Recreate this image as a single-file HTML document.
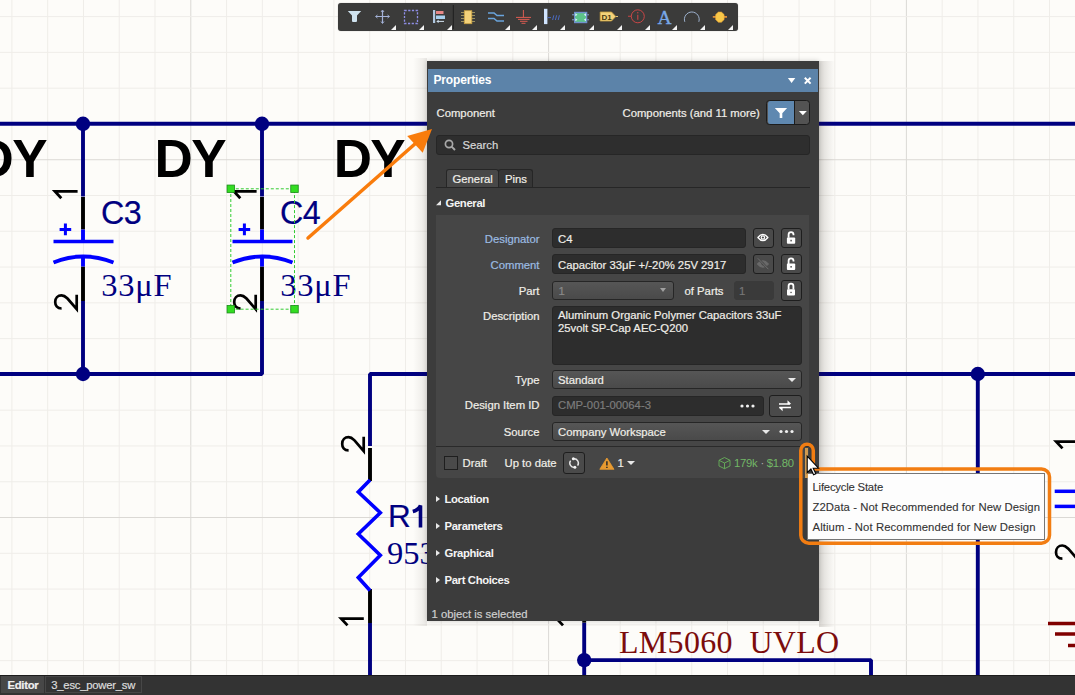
<!DOCTYPE html>
<html><head><meta charset="utf-8">
<style>
*{margin:0;padding:0;box-sizing:border-box}
html,body{width:1075px;height:695px;overflow:hidden;background:#fdfcf9;font-family:"Liberation Sans",sans-serif}
.a{position:absolute}
svg.a{overflow:visible}
.t{position:absolute;white-space:pre;line-height:1;font-size:11.3px;color:#f0eee8;-webkit-text-stroke:0.2px currentColor}
.lbl{position:absolute;white-space:pre;line-height:1;font-size:11.3px;color:#f0eee8;text-align:right;-webkit-text-stroke:0.2px currentColor}
.inp{position:absolute;background:#2d2d2d;border:1px solid #262626;border-radius:3px}
.dd{position:absolute;background:linear-gradient(#565656,#4a4a4a);border:1px solid #262626;border-radius:3px}
.btn{position:absolute;background:#4a4a4a;border:1.4px solid #1e1e1e;border-radius:3px}
.sec{position:absolute;font-weight:bold;font-size:11.3px;color:#f4f4f4;white-space:pre;line-height:1;letter-spacing:-0.35px}
.tri{position:absolute;width:0;height:0;border-left:5px solid transparent;border-right:5px solid transparent;border-top:5px solid #e8e8e8}
.rtri{position:absolute;width:0;height:0;border-top:3px solid transparent;border-bottom:3px solid transparent;border-left:4.2px solid #e8e8e8}
.tbt{position:absolute;width:0;height:0;border-left:5px solid transparent;border-bottom:5px solid #f4f4f4;top:24.5px}
</style></head><body>
<svg class="a" style="left:0;top:0" width="1075" height="695" viewBox="0 0 1075 695">
<rect width="1075" height="695" fill="#fdfcf9"/>
<line x1="11.90" y1="0" x2="11.90" y2="695" stroke="#efede9" stroke-width="1"/>
<line x1="47.68" y1="0" x2="47.68" y2="695" stroke="#efede9" stroke-width="1"/>
<line x1="83.46" y1="0" x2="83.46" y2="695" stroke="#efede9" stroke-width="1"/>
<line x1="119.24" y1="0" x2="119.24" y2="695" stroke="#efede9" stroke-width="1"/>
<line x1="155.02" y1="0" x2="155.02" y2="695" stroke="#efede9" stroke-width="1"/>
<line x1="190.80" y1="0" x2="190.80" y2="695" stroke="#dbd9d5" stroke-width="1"/>
<line x1="226.58" y1="0" x2="226.58" y2="695" stroke="#efede9" stroke-width="1"/>
<line x1="262.36" y1="0" x2="262.36" y2="695" stroke="#efede9" stroke-width="1"/>
<line x1="298.14" y1="0" x2="298.14" y2="695" stroke="#efede9" stroke-width="1"/>
<line x1="333.92" y1="0" x2="333.92" y2="695" stroke="#efede9" stroke-width="1"/>
<line x1="369.70" y1="0" x2="369.70" y2="695" stroke="#efede9" stroke-width="1"/>
<line x1="405.48" y1="0" x2="405.48" y2="695" stroke="#efede9" stroke-width="1"/>
<line x1="441.26" y1="0" x2="441.26" y2="695" stroke="#efede9" stroke-width="1"/>
<line x1="477.04" y1="0" x2="477.04" y2="695" stroke="#efede9" stroke-width="1"/>
<line x1="512.82" y1="0" x2="512.82" y2="695" stroke="#efede9" stroke-width="1"/>
<line x1="548.60" y1="0" x2="548.60" y2="695" stroke="#dbd9d5" stroke-width="1"/>
<line x1="584.38" y1="0" x2="584.38" y2="695" stroke="#efede9" stroke-width="1"/>
<line x1="620.16" y1="0" x2="620.16" y2="695" stroke="#efede9" stroke-width="1"/>
<line x1="655.94" y1="0" x2="655.94" y2="695" stroke="#efede9" stroke-width="1"/>
<line x1="691.72" y1="0" x2="691.72" y2="695" stroke="#efede9" stroke-width="1"/>
<line x1="727.50" y1="0" x2="727.50" y2="695" stroke="#efede9" stroke-width="1"/>
<line x1="763.28" y1="0" x2="763.28" y2="695" stroke="#efede9" stroke-width="1"/>
<line x1="799.06" y1="0" x2="799.06" y2="695" stroke="#efede9" stroke-width="1"/>
<line x1="834.84" y1="0" x2="834.84" y2="695" stroke="#efede9" stroke-width="1"/>
<line x1="870.62" y1="0" x2="870.62" y2="695" stroke="#efede9" stroke-width="1"/>
<line x1="906.40" y1="0" x2="906.40" y2="695" stroke="#dbd9d5" stroke-width="1"/>
<line x1="942.18" y1="0" x2="942.18" y2="695" stroke="#efede9" stroke-width="1"/>
<line x1="977.96" y1="0" x2="977.96" y2="695" stroke="#efede9" stroke-width="1"/>
<line x1="1013.74" y1="0" x2="1013.74" y2="695" stroke="#efede9" stroke-width="1"/>
<line x1="1049.52" y1="0" x2="1049.52" y2="695" stroke="#efede9" stroke-width="1"/>
<line x1="0" y1="16.60" x2="1075" y2="16.60" stroke="#efede9" stroke-width="1"/>
<line x1="0" y1="52.38" x2="1075" y2="52.38" stroke="#efede9" stroke-width="1"/>
<line x1="0" y1="88.16" x2="1075" y2="88.16" stroke="#efede9" stroke-width="1"/>
<line x1="0" y1="123.94" x2="1075" y2="123.94" stroke="#efede9" stroke-width="1"/>
<line x1="0" y1="159.72" x2="1075" y2="159.72" stroke="#dbd9d5" stroke-width="1"/>
<line x1="0" y1="195.50" x2="1075" y2="195.50" stroke="#efede9" stroke-width="1"/>
<line x1="0" y1="231.28" x2="1075" y2="231.28" stroke="#efede9" stroke-width="1"/>
<line x1="0" y1="267.06" x2="1075" y2="267.06" stroke="#efede9" stroke-width="1"/>
<line x1="0" y1="302.84" x2="1075" y2="302.84" stroke="#efede9" stroke-width="1"/>
<line x1="0" y1="338.62" x2="1075" y2="338.62" stroke="#efede9" stroke-width="1"/>
<line x1="0" y1="374.40" x2="1075" y2="374.40" stroke="#efede9" stroke-width="1"/>
<line x1="0" y1="410.18" x2="1075" y2="410.18" stroke="#efede9" stroke-width="1"/>
<line x1="0" y1="445.96" x2="1075" y2="445.96" stroke="#efede9" stroke-width="1"/>
<line x1="0" y1="481.74" x2="1075" y2="481.74" stroke="#efede9" stroke-width="1"/>
<line x1="0" y1="517.52" x2="1075" y2="517.52" stroke="#dbd9d5" stroke-width="1"/>
<line x1="0" y1="553.30" x2="1075" y2="553.30" stroke="#efede9" stroke-width="1"/>
<line x1="0" y1="589.08" x2="1075" y2="589.08" stroke="#efede9" stroke-width="1"/>
<line x1="0" y1="624.86" x2="1075" y2="624.86" stroke="#efede9" stroke-width="1"/>
<line x1="0" y1="660.64" x2="1075" y2="660.64" stroke="#efede9" stroke-width="1"/>
<path d="M0.0,123.8 L1075.0,123.8" fill="none" stroke="#000080" stroke-width="3.9" stroke-linejoin="bevel" stroke-linecap="butt"/>
<path d="M0.0,374.0 L262.0,374.0 L262.0,301.0" fill="none" stroke="#000080" stroke-width="3.9" stroke-linejoin="bevel" stroke-linecap="butt"/>
<path d="M262.0,123.8 L262.0,196.5" fill="none" stroke="#000080" stroke-width="3.9" stroke-linejoin="bevel" stroke-linecap="butt"/>
<path d="M83.0,123.8 L83.0,196.5" fill="none" stroke="#000080" stroke-width="3.9" stroke-linejoin="bevel" stroke-linecap="butt"/>
<path d="M83.0,301.0 L83.0,374.0" fill="none" stroke="#000080" stroke-width="3.9" stroke-linejoin="bevel" stroke-linecap="butt"/>
<path d="M370.0,446.0 L370.0,374.0 L1075.0,374.0" fill="none" stroke="#000080" stroke-width="3.9" stroke-linejoin="bevel" stroke-linecap="butt"/>
<path d="M370.0,623.0 L370.0,695.0" fill="none" stroke="#000080" stroke-width="3.9" stroke-linejoin="bevel" stroke-linecap="butt"/>
<path d="M977.8,374.0 L977.8,695.0" fill="none" stroke="#000080" stroke-width="3.9" stroke-linejoin="bevel" stroke-linecap="butt"/>
<path d="M584.2,622.6 L584.2,695.0" fill="none" stroke="#000080" stroke-width="3.9" stroke-linejoin="bevel" stroke-linecap="butt"/>
<path d="M584.2,660.1 L871.0,660.1 L871.0,695.0" fill="none" stroke="#000080" stroke-width="3.9" stroke-linejoin="bevel" stroke-linecap="butt"/>
<circle cx="83.0" cy="123.8" r="7.2" fill="#000080"/>
<circle cx="262.0" cy="123.8" r="7.2" fill="#000080"/>
<circle cx="83.0" cy="374.0" r="7.2" fill="#000080"/>
<circle cx="977.8" cy="374.0" r="7.2" fill="#000080"/>
<circle cx="584.2" cy="660.1" r="7.2" fill="#000080"/>
<line x1="83.0" y1="197" x2="83.0" y2="229.5" stroke="#000" stroke-width="3.9"/>
<line x1="83.0" y1="266.5" x2="83.0" y2="301" stroke="#000" stroke-width="3.9"/>
<line x1="83.0" y1="229.5" x2="83.0" y2="242" stroke="#0000ff" stroke-width="3.9"/>
<line x1="83.0" y1="256" x2="83.0" y2="266.5" stroke="#0000ff" stroke-width="3.9"/>
<line x1="53.5" y1="241.5" x2="113.5" y2="241.5" stroke="#0000ff" stroke-width="3.6"/>
<path d="M53.5,262.5 Q83.0,250.5 113.5,262.5" fill="none" stroke="#0000ff" stroke-width="3.8"/>
<path d="M59.6,229.4 h11.6 M65.4,223.6 v11.6" stroke="#0000ff" stroke-width="3"/>
<path d="M77.6,191.4 H55.0 L61.3,198.2" fill="none" stroke="#000" stroke-width="2.8" stroke-linejoin="miter"/>
<path d="M61.6,308.5 C57.0,308.5 55.2,305.0 55.2,302.0 C55.2,298.0 58.0,295.3 61.5,295.3 C64.5,295.3 66.0,297.0 67.5,298.5 L76.7,309.2 V294.8" fill="none" stroke="#000" stroke-width="2.7" stroke-linejoin="miter"/>
<text x="101.0" y="223.7" font-family="Liberation Sans" font-size="32.3" letter-spacing="-0.5" fill="#000080" stroke="#000080" stroke-width="0.2">C3</text>
<text x="101.2" y="296" font-family="Liberation Serif" font-size="32.5" letter-spacing="0.8" fill="#000080">33μF</text>
<line x1="262.0" y1="197" x2="262.0" y2="229.5" stroke="#000" stroke-width="3.9"/>
<line x1="262.0" y1="266.5" x2="262.0" y2="301" stroke="#000" stroke-width="3.9"/>
<line x1="262.0" y1="229.5" x2="262.0" y2="242" stroke="#0000ff" stroke-width="3.9"/>
<line x1="262.0" y1="256" x2="262.0" y2="266.5" stroke="#0000ff" stroke-width="3.9"/>
<line x1="232.5" y1="241.5" x2="292.5" y2="241.5" stroke="#0000ff" stroke-width="3.6"/>
<path d="M232.5,262.5 Q262.0,250.5 292.5,262.5" fill="none" stroke="#0000ff" stroke-width="3.8"/>
<path d="M238.6,229.4 h11.6 M244.4,223.6 v11.6" stroke="#0000ff" stroke-width="3"/>
<path d="M256.6,191.4 H234.0 L240.3,198.2" fill="none" stroke="#000" stroke-width="2.8" stroke-linejoin="miter"/>
<path d="M240.6,308.5 C236.0,308.5 234.2,305.0 234.2,302.0 C234.2,298.0 237.0,295.3 240.5,295.3 C243.5,295.3 245.0,297.0 246.5,298.5 L255.7,309.2 V294.8" fill="none" stroke="#000" stroke-width="2.7" stroke-linejoin="miter"/>
<text x="280.0" y="223.7" font-family="Liberation Sans" font-size="32.3" letter-spacing="-0.5" fill="#000080" stroke="#000080" stroke-width="0.2">C4</text>
<text x="280.2" y="296" font-family="Liberation Serif" font-size="32.5" letter-spacing="0.8" fill="#000080">33μF</text>
<text x="-24.5" y="177" font-family="Liberation Sans" font-weight="bold" font-size="53" letter-spacing="-1.6" fill="#000">DY</text>
<text x="154.6" y="177" font-family="Liberation Sans" font-weight="bold" font-size="53" letter-spacing="-1.6" fill="#000">DY</text>
<text x="333.7" y="177" font-family="Liberation Sans" font-weight="bold" font-size="53" letter-spacing="-1.6" fill="#000">DY</text>
<line x1="370.0" y1="448" x2="370.0" y2="481" stroke="#000" stroke-width="3.9"/>
<line x1="370.0" y1="589" x2="370.0" y2="623" stroke="#000" stroke-width="3.9"/>
<path d="M370.0,480 L358.3,492 L380.3,512.7 L358.3,534 L380.3,555.2 L358.3,577.5 L370.0,590.5" fill="none" stroke="#0000ff" stroke-width="3.6" stroke-linejoin="miter"/>
<path d="M348.6,450.4 C344.0,450.4 342.2,446.9 342.2,443.9 C342.2,439.9 345.0,437.2 348.5,437.2 C351.5,437.2 353.0,438.9 354.5,440.4 L363.7,451.1 V436.7" fill="none" stroke="#000" stroke-width="2.7" stroke-linejoin="miter"/>
<path d="M363.8,618.6 H341.2 L347.5,625.4" fill="none" stroke="#000" stroke-width="2.8" stroke-linejoin="miter"/>
<text x="388" y="527.3" font-family="Liberation Sans" font-size="31.5" fill="#000080" stroke="#000080" stroke-width="0.2">R</text><path d="M420.5,527.5 V505.6 Q418.5,510 412.8,511.6" fill="none" stroke="#000080" stroke-width="3.6"/>
<text x="387" y="563.8" font-family="Liberation Serif" font-size="32.5" fill="#000080">953</text>
<path d="M579.3,618.6 H556.7 L563.0,625.4" fill="none" stroke="#000" stroke-width="2.8" stroke-linejoin="miter"/>
<line x1="584.2" y1="600" x2="584.2" y2="622.6" stroke="#000" stroke-width="3.9"/>
<text x="619" y="653.3" font-family="Liberation Serif" font-size="32" letter-spacing="0.3" fill="#7c0c0c" xml:space="preserve">LM5060  UVLO</text>
<line x1="1054.7" y1="491.3" x2="1075" y2="491.3" stroke="#0000ff" stroke-width="3.5"/>
<line x1="1054.7" y1="506.4" x2="1075" y2="506.4" stroke="#0000ff" stroke-width="3.5"/>
<path d="M1078.8,441.6 H1056.2 L1062.5,448.4" fill="none" stroke="#000" stroke-width="2.8" stroke-linejoin="miter"/>
<path d="M1062.4,558.7 C1057.8,558.7 1056.0,555.2 1056.0,552.2 C1056.0,548.2 1058.8,545.5 1062.3,545.5 C1065.3,545.5 1066.8,547.2 1068.3,548.7 L1077.5,559.4 V545.0" fill="none" stroke="#000" stroke-width="2.7" stroke-linejoin="miter"/>
<path d="M1048,623.5 H1075 M1055,634 H1075 M1068,645.5 H1075" stroke="#800000" stroke-width="3.4"/>
<rect x="230.8" y="188.8" width="63.69999999999999" height="120.39999999999998" fill="none" stroke="#33cc33" stroke-width="1" stroke-dasharray="3,2"/>
<rect x="227.05" y="185.05" width="7.5" height="7.5" fill="#33dd22" stroke="#1a8a1a" stroke-width="0.8"/>
<rect x="290.75" y="185.05" width="7.5" height="7.5" fill="#33dd22" stroke="#1a8a1a" stroke-width="0.8"/>
<rect x="227.05" y="305.45" width="7.5" height="7.5" fill="#33dd22" stroke="#1a8a1a" stroke-width="0.8"/>
<rect x="290.75" y="305.45" width="7.5" height="7.5" fill="#33dd22" stroke="#1a8a1a" stroke-width="0.8"/>
</svg>

<!-- toolbar -->
<div class="a" style="left:337.5px;top:3px;width:400px;height:27.5px;background:#3b3b3a;border-radius:3px;box-shadow:0 0 1px rgba(0,0,0,.4)">
</div>
<svg class="a" style="left:0;top:0" width="1075" height="40" viewBox="0 0 1075 40">
<!-- filter -->
<path d="M347.8,11.1 H361.2 L357,15.6 V21 Q357,22 356,22 H353 Q352,22 352,21 V15.6 Z" fill="#cfe3ef"/>
<!-- cross -->
<path d="M376,16.5 H389 M382.5,10.5 V23" stroke="#a4b2d8" stroke-width="1.2"/><path d="M381,12 L382.5,10 L384,12 M381,21.5 L382.5,23.5 L384,21.5 M377.5,15 L375.5,16.5 L377.5,18 M387.5,15 L389.5,16.5 L387.5,18" fill="none" stroke="#a4b2d8" stroke-width="0.9"/>
<!-- dashed rect -->
<rect x="404.5" y="10.5" width="13" height="13" fill="none" stroke="#8f8ee6" stroke-width="1.3" stroke-dasharray="2.2,1.5"/>
<!-- align -->
<rect x="433" y="10" width="2.2" height="13" fill="#b0c8e0"/>
<rect x="436" y="11" width="7.5" height="3" fill="#e88888"/>
<rect x="436" y="15.5" width="9" height="3.5" fill="#a8d0ee"/>
<path d="M438,21.4 H444" stroke="#d0e0ee" stroke-width="1"/><path d="M436.3,21.4 L438.6,19.8 V23 Z" fill="#d0e0ee"/>
<!-- separator -->
<line x1="453.3" y1="5" x2="453.3" y2="29" stroke="#1e1e1e" stroke-width="1"/>
<!-- IC -->
<path d="M461,12.5 H475 M461,15.5 H475 M461,18.5 H475 M461,21.5 H475" stroke="#9a9060" stroke-width="1"/>
<rect x="464.3" y="10.7" width="7.5" height="13" fill="#f4d27a" stroke="#c8a040" stroke-width="0.8"/>
<!-- bus wires -->
<path d="M488,12.9 H494 L497,15.6 H504 M488,18.4 H494 L497,21.1 H504" stroke="#6aa4dc" stroke-width="1.5" fill="none"/>
<!-- ground -->
<path d="M523.4,10 V17.4 M516,17.4 H531 M518,19.4 H529.5 M520,21.3 H527.5 M521.5,23.3 H525.5" stroke="#dc5c52" stroke-width="1" fill="none"/>
<!-- bus entry -->
<rect x="544" y="8.8" width="3.4" height="15.3" fill="#d0e4ff"/>
<path d="M547.5,17.6 H551 M552.6,20 L553.8,15.3 M555.4,20 L556.6,15.3 M558.2,20 L559.4,15.3" stroke="#4a6ac0" stroke-width="1" fill="none"/>
<!-- sheet symbol -->
<rect x="574" y="11.8" width="13.3" height="11.4" fill="#7090cc"/>
<rect x="575.3" y="13.2" width="10.7" height="8.6" fill="#5cc48a"/>
<path d="M572,14.8 H574 M572,19.8 H574 M587.3,14.8 H589 M587.3,19.8 H589" stroke="#8aaee0" stroke-width="0.9"/>
<path d="M575.3,13.3 l2.2,1.5 l-2.2,1.5 Z M575.3,18.3 l2.2,1.5 l-2.2,1.5 Z M586,13.3 l-2.2,1.5 l2.2,1.5 Z M586,18.3 l-2.2,1.5 l2.2,1.5 Z" fill="#d8f0ff"/>
<!-- port D1 -->
<path d="M600.2,12 H611.5 L615.8,16.5 L611.5,21 H600.2 Z" fill="#f4d27a" stroke="#c8a040" stroke-width="0.8"/>
<path d="M615.8,16.5 H618" stroke="#e0c070" stroke-width="1"/>
<text x="601.5" y="20" font-family="Liberation Sans" font-weight="bold" font-size="8" fill="#4a3a10">D1</text>
<!-- power/ probe -->
<circle cx="637.8" cy="16.3" r="6.5" fill="none" stroke="#c84646" stroke-width="1"/>
<path d="M628,16.3 H631.3 M637.8,14.8 V19.8" stroke="#c84646" stroke-width="1.1"/>
<circle cx="637.8" cy="12.8" r="0.7" fill="#c84646"/>
<!-- A -->
<text x="657.5" y="23.8" font-family="Liberation Serif" font-size="19.5" fill="#78a8e8" stroke="#78a8e8" stroke-width="0.3">A</text>
<!-- arc -->
<path d="M684.8,21.8 A7.4,7.4 0 1 1 698.8,21.8" fill="none" stroke="#a8bede" stroke-width="0.9"/>
<!-- junction -->
<path d="M712.8,16.9 H727" stroke="#f09838" stroke-width="1.6"/>
<path d="M715.7,14.6 L718.4,12.1 H721.4 L724.1,14.6 V19.6 L721.4,22.2 H718.4 L715.7,19.6 Z" fill="#f8c848" stroke="#f0a838" stroke-width="0.6"/>
</svg>
<div class="tbt" style="left:391px"></div>
<div class="tbt" style="left:419px"></div>
<div class="tbt" style="left:447px"></div>
<div class="tbt" style="left:504.5px"></div>
<div class="tbt" style="left:532px"></div>
<div class="tbt" style="left:560px"></div>
<div class="tbt" style="left:588.5px"></div>
<div class="tbt" style="left:616.5px"></div>
<div class="tbt" style="left:644.5px"></div>
<div class="tbt" style="left:672px"></div>
<div class="tbt" style="left:700px"></div>
<div class="tbt" style="left:728px"></div>

<!-- panel -->
<div class="a" style="left:819px;top:61px;width:16px;height:566px;background:linear-gradient(to right,rgba(40,30,20,.17),rgba(40,30,20,.07) 55%,rgba(40,30,20,0))"></div>
<div class="a" style="left:413px;top:58px;width:14px;height:568px;background:linear-gradient(to left,rgba(40,30,20,.09),rgba(40,30,20,0))"></div>
<div class="a" style="left:427px;top:61px;width:392px;height:560px;background:#3c3c3c;box-shadow:0 0 5px rgba(0,0,0,.2)"></div>
<div class="a" style="left:428px;top:69px;width:390px;height:23px;background:#5c83a9"></div>
<div class="t" style="left:433.5px;top:74.2px;font-size:12px;font-weight:bold;color:#fff;letter-spacing:-0.15px;-webkit-text-stroke:0">Properties</div>

<svg class="a" style="left:0;top:0" width="1075" height="695" viewBox="0 0 1075 695">
<path d="M804.8,77.8 L810.6,83.6 M810.6,77.8 L804.8,83.6" stroke="#fff" stroke-width="2"/>
<path d="M787.9,78 H795.3 L791.6,82.9 Z" fill="#fff"/>
</svg>

<div class="t" style="left:436.5px;top:108px">Component</div>
<div class="t" style="left:622.5px;top:108px">Components (and 11 more)</div>
<div class="a" style="left:766.4px;top:100.1px;width:43.2px;height:25.3px;background:#535353;border:1.3px solid #1c1c1c;border-radius:3.5px"></div>
<div class="a" style="left:767.7px;top:101.4px;width:27px;height:22.7px;background:#5f88b0;border-radius:2.5px 0 0 2.5px;border-right:1.2px solid #1c1c1c"></div>
<svg class="a" style="left:0;top:0" width="1075" height="695" viewBox="0 0 1075 695">
<path d="M774.8,108 H787.1 L782.3,113.2 V118 H779.7 V113.2 Z" fill="#fff"/>
<path d="M798.9,110.9 H806.8 L802.85,115.2 Z" fill="#fff"/>
</svg>
<!-- search -->
<div class="inp" style="left:436px;top:135px;width:374px;height:19.5px;background:#2e2e2e"></div>
<svg class="a" style="left:0;top:0" width="1075" height="695" viewBox="0 0 1075 695">
<circle cx="449" cy="144" r="3.6" fill="none" stroke="#a8a8a8" stroke-width="1.7"/>
<path d="M451.6,146.6 L455,150" stroke="#a8a8a8" stroke-width="1.9"/>
</svg>
<div class="t" style="left:462.5px;top:140px;color:#d8d8d8">Search</div>

<!-- tabs -->
<div class="a" style="left:436px;top:186.5px;width:374px;height:1px;background:#262626"></div>
<div class="a" style="left:445.5px;top:169.2px;width:53px;height:18px;background:#484848;border:1px solid #262626;border-bottom:none;border-radius:3px 3px 0 0"></div>
<div class="a" style="left:498px;top:169.2px;width:34.7px;height:18px;background:#363636;border:1px solid #262626;border-bottom:none;border-radius:3px 3px 0 0"></div>
<div class="t" style="left:452.5px;top:174px">General</div>
<div class="t" style="left:505px;top:174px">Pins</div>

<!-- General section -->
<svg class="a" style="left:0;top:0" width="1075" height="695" viewBox="0 0 1075 695">
<path d="M436,205.2 L441,200.2 L441,205.2 Z" fill="#e8e8e8"/>
</svg>
<div class="sec" style="left:445.5px;top:198px">General</div>

<div class="a" style="left:436px;top:215px;width:373px;height:263px;background:#464646;border-radius:0 0 4px 4px"></div>

<div class="lbl" style="top:234px;color:#9cbce2;right:535.5px">Designator</div>
<div class="inp" style="left:552px;top:228px;width:194px;height:20px"></div>
<div class="t" style="left:558px;top:234px">C4</div>
<div class="btn" style="left:752.5px;top:227.5px;width:21px;height:20.8px"></div>
<div class="btn" style="left:780.5px;top:227.5px;width:21px;height:20.8px"></div>

<div class="lbl" style="top:260px;color:#9cbce2;right:535.5px">Comment</div>
<div class="inp" style="left:552px;top:254px;width:194px;height:19.7px"></div>
<div class="t" style="left:558px;top:260px">Capacitor 33μF +/-20% 25V 2917</div>
<div class="btn" style="left:752.5px;top:253.5px;width:21px;height:20.8px"></div>
<div class="btn" style="left:780.5px;top:253.5px;width:21px;height:20.8px"></div>

<div class="lbl" style="top:286px;right:535.5px">Part</div>
<div class="dd" style="left:552px;top:280.8px;width:121.5px;height:19.5px"></div>
<div class="t" style="left:558.5px;top:286px;color:#8a8a8a">1</div>
<div class="tri" style="left:660.3px;top:288.2px;border-left-width:3.7px;border-right-width:3.7px;border-top-width:4px;border-top-color:#a0a0a0"></div>
<div class="t" style="left:684.5px;top:286px">of Parts</div>
<div class="inp" style="left:734px;top:280.5px;width:40px;height:19.5px;background:#3a3a3a;border-color:#3a3a3a"></div>
<div class="t" style="left:739px;top:286px;color:#777">1</div>
<div class="btn" style="left:780.5px;top:279.8px;width:21px;height:20.8px"></div>

<div class="lbl" style="top:311px;right:535.5px">Description</div>
<div class="inp" style="left:552px;top:305.5px;width:250px;height:59px"></div>
<div class="t" style="left:558px;top:309.2px;line-height:12.8px">Aluminum Organic Polymer Capacitors 33uF
25volt SP-Cap AEC-Q200</div>

<div class="lbl" style="top:375px;right:535.5px">Type</div>
<div class="dd" style="left:552px;top:369.7px;width:249.5px;height:19.5px"></div>
<div class="t" style="left:558px;top:375px">Standard</div>
<div class="tri" style="left:788px;top:377.6px;border-left-width:4px;border-right-width:4px;border-top-width:4.6px"></div>

<div class="lbl" style="top:400px;right:535.5px">Design Item ID</div>
<div class="inp" style="left:552px;top:396px;width:211.5px;height:19.7px"></div>
<div class="t" style="left:558px;top:400px;color:#7c7c7c">CMP-001-00064-3</div>
<svg class="a" style="left:0;top:0" width="1075" height="695" viewBox="0 0 1075 695">
<circle cx="742" cy="406" r="1.6" fill="#f0f0f0"/><circle cx="747.5" cy="406" r="1.6" fill="#f0f0f0"/><circle cx="753" cy="406" r="1.6" fill="#f0f0f0"/>
</svg>
<div class="btn" style="left:768.5px;top:394.5px;width:33px;height:22px"></div>

<div class="lbl" style="top:427px;right:535.5px">Source</div>
<div class="dd" style="left:552px;top:421.8px;width:249.5px;height:19.5px"></div>
<div class="t" style="left:558px;top:427px">Company Workspace</div>
<div class="tri" style="left:762.1px;top:429.6px;border-left-width:4px;border-right-width:4px;border-top-width:4.6px"></div>
<svg class="a" style="left:0;top:0" width="1075" height="695" viewBox="0 0 1075 695">
<circle cx="781" cy="431.5" r="1.6" fill="#f0f0f0"/><circle cx="786.5" cy="431.5" r="1.6" fill="#f0f0f0"/><circle cx="792" cy="431.5" r="1.6" fill="#f0f0f0"/>
</svg>

<div class="a" style="left:436px;top:446px;width:373px;height:1px;background:#2a2a2a"></div>
<div class="a" style="left:444.2px;top:456.1px;width:13.7px;height:13.8px;background:#4a4a4a;border:1.6px solid #1e1e1e"></div>
<div class="t" style="left:462.5px;top:457.7px">Draft</div>
<div class="t" style="left:504.5px;top:457.7px">Up to date</div>
<div class="btn" style="left:563.4px;top:452.4px;width:21.4px;height:21.4px;background:#4a4a4a;border:1.5px solid #1e1e1e"></div>
<svg class="a" style="left:0;top:0" width="1075" height="695" viewBox="0 0 1075 695">
<!-- refresh -->
<path d="M573.35,458.87 A4.3,4.3 0 0 1 577.6,465.6 M574.85,467.33 A4.3,4.3 0 0 1 570.6,460.6" fill="none" stroke="#e8e8e8" stroke-width="1.4"/>
<circle cx="573.35" cy="458.87" r="1.5" fill="#f4f4f4"/><circle cx="574.85" cy="467.33" r="1.5" fill="#f4f4f4"/>
<!-- warning -->
<path d="M606.9,458 L614,469.3 H599.8 Z" fill="#e89a30" stroke="#e89a30" stroke-width="0.8" stroke-linejoin="round"/>
<path d="M606.9,461.3 V465.5 M606.9,466.7 V468" stroke="#2a2a2a" stroke-width="1.5"/>
<!-- cube -->
<path d="M724.5,457.5 L730,460.3 V466 L724.5,468.7 L719,466 V460.3 Z M719,460.3 L724.5,463 L730,460.3 M724.5,463 V468.7" fill="none" stroke="#68b05a" stroke-width="0.9"/>
</svg>
<div class="t" style="left:617.5px;top:457.7px">1</div>
<div class="tri" style="left:627px;top:461px;border-left-width:4px;border-right-width:4px;border-top-width:4.5px"></div>
<div class="t" style="left:734px;top:457.7px;color:#72b866;letter-spacing:-0.25px;-webkit-text-stroke:0">179k <span style="color:#b0b0b0">·</span> $1.80</div>

<svg class="a" style="left:0;top:0" width="1075" height="695" viewBox="0 0 1075 695">
<!-- eye -->
<path d="M757.9,237.5 Q762.9,231.2 767.9,237.5 Q762.9,243.8 757.9,237.5 Z" fill="none" stroke="#fff" stroke-width="1.3" stroke-linejoin="round"/>
<circle cx="762.9" cy="237.5" r="1.7" fill="none" stroke="#fff" stroke-width="1.2"/>
<!-- eye slash -->
<path d="M757.6,264 Q762.9,257.7 768.2,264 Q762.9,270.3 757.6,264 Z" fill="#6a6a6a" stroke="#6a6a6a" stroke-width="1.2"/>
<circle cx="762.9" cy="264" r="1.4" fill="#484848"/>
<path d="M757.8,258.3 L768.4,269.2" stroke="#484848" stroke-width="2.2"/>
<path d="M757.8,258.3 L768.4,269.2" stroke="#707070" stroke-width="1"/>
<!-- lock open 1 -->
<rect x="786.9" y="237.4" width="8.3" height="6.4" rx="1" fill="#fff"/>
<rect x="790.4" y="239.8" width="1.4" height="1.6" fill="#484848"/>
<path d="M788.6,237.8 V234.6 A2.45,2.45 0 0 1 793.5,234.6 V235.3" fill="none" stroke="#fff" stroke-width="1.8"/>
<!-- lock open 2 -->
<rect x="786.9" y="263.6" width="8.3" height="6.4" rx="1" fill="#fff"/>
<rect x="790.4" y="266" width="1.4" height="1.6" fill="#484848"/>
<path d="M788.6,264 V260.8 A2.45,2.45 0 0 1 793.5,260.8 V261.5" fill="none" stroke="#fff" stroke-width="1.8"/>
<!-- lock closed -->
<rect x="787" y="289.2" width="8" height="6.3" rx="1" fill="#fff"/>
<rect x="790.4" y="291.8" width="1.3" height="1.3" fill="#484848"/>
<path d="M788.6,289.5 V286 A2.4,2.4 0 0 1 793.4,286 V289.5" fill="none" stroke="#fff" stroke-width="1.8"/>
<!-- swap -->
<path d="M779,403.9 H790 M779.3,407.6 H791" stroke="#fff" stroke-width="1.5"/>
<path d="M787.5,400.2 L791.2,403.9 L787.5,404.6 Z M782.6,406.9 L778.9,407.6 L782.6,411.3 Z" fill="#fff"/>
</svg>

<!-- collapsed sections -->
<div class="rtri" style="left:436px;top:496px"></div>
<div class="sec" style="left:444.5px;top:494px">Location</div>
<div class="rtri" style="left:436px;top:523px"></div>
<div class="sec" style="left:444.5px;top:521px">Parameters</div>
<div class="rtri" style="left:436px;top:549.5px"></div>
<div class="sec" style="left:444.5px;top:547.5px">Graphical</div>
<div class="rtri" style="left:436px;top:576.5px"></div>
<div class="sec" style="left:444.5px;top:574.5px">Part Choices</div>

<div class="t" style="left:431.5px;top:609px;color:#cfcfcf">1 object is selected</div>

<!-- arrow on top -->
<svg class="a" style="left:0;top:0" width="1075" height="695" viewBox="0 0 1075 695">
<line x1="308" y1="238" x2="416" y2="143" stroke="#f97c0c" stroke-width="3.5" stroke-linecap="round"/>
<path d="M432,129 L407.2,135.9 L422.7,152.8 Z" fill="#f97c0c"/>
</svg>

<!-- tooltip -->
<div class="a" style="left:807px;top:473px;width:237.5px;height:66.5px;background:#fdfdfd;border:1px solid #767676"></div>
<div class="t" style="left:812.5px;top:482.2px;color:#333;font-size:11.3px;letter-spacing:-0.2px;-webkit-text-stroke:0.1px #333">Lifecycle State</div>
<div class="t" style="left:812.5px;top:502.2px;color:#333;font-size:11.3px;letter-spacing:0.07px;-webkit-text-stroke:0.1px #333">Z2Data - Not Recommended for New Design</div>
<div class="t" style="left:812.5px;top:522.2px;color:#333;font-size:11.3px;letter-spacing:0.1px;-webkit-text-stroke:0.1px #333">Altium - Not Recommended for New Design</div>

<!-- lifecycle indicator -->
<div class="a" style="left:805px;top:447.7px;width:3px;height:30px;background:#d09a50"></div>

<!-- orange highlight -->
<svg class="a" style="left:0;top:0" width="1075" height="695" viewBox="0 0 1075 695">
<path d="M800.8,450.5 A6.25,6.25 0 0 1 813.3,450.5 V469 H1041.5 A8,8 0 0 1 1049.5,477 V535.2 A8,8 0 0 1 1041.5,543.2 H808.8 A8,8 0 0 1 800.8,535.2 Z" fill="none" stroke="#f27d12" stroke-width="3.5"/>
</svg>

<!-- cursor -->
<svg class="a" style="left:0;top:0" width="1075" height="695" viewBox="0 0 1075 695">
<path d="M807.2,456.2 V472.6 L810.9,469 L813.6,474.8 L815.9,473.8 L813.2,468.2 L818.5,468.2 Z" fill="#fff" stroke="#000" stroke-width="1.1" stroke-linejoin="miter"/>
</svg>

<!-- bottom bar -->
<div class="a" style="left:0;top:674.6px;width:1075px;height:21px;background:#333;border-top:1.2px solid #1c1c1c"></div>
<div class="a" style="left:1.2px;top:676.2px;width:42.7px;height:17px;background:#474747"></div>
<div class="a" style="left:44.6px;top:676.4px;width:97px;height:17px;background:#343434;border:1px solid #474747"></div>
<div class="t" style="left:7.5px;top:680px;font-weight:bold;color:#f0f0f0;letter-spacing:-0.3px">Editor</div>
<div class="t" style="left:51.3px;top:680px;color:#dcdcdc;letter-spacing:-0.25px">3_esc_power_sw</div>
</body></html>
